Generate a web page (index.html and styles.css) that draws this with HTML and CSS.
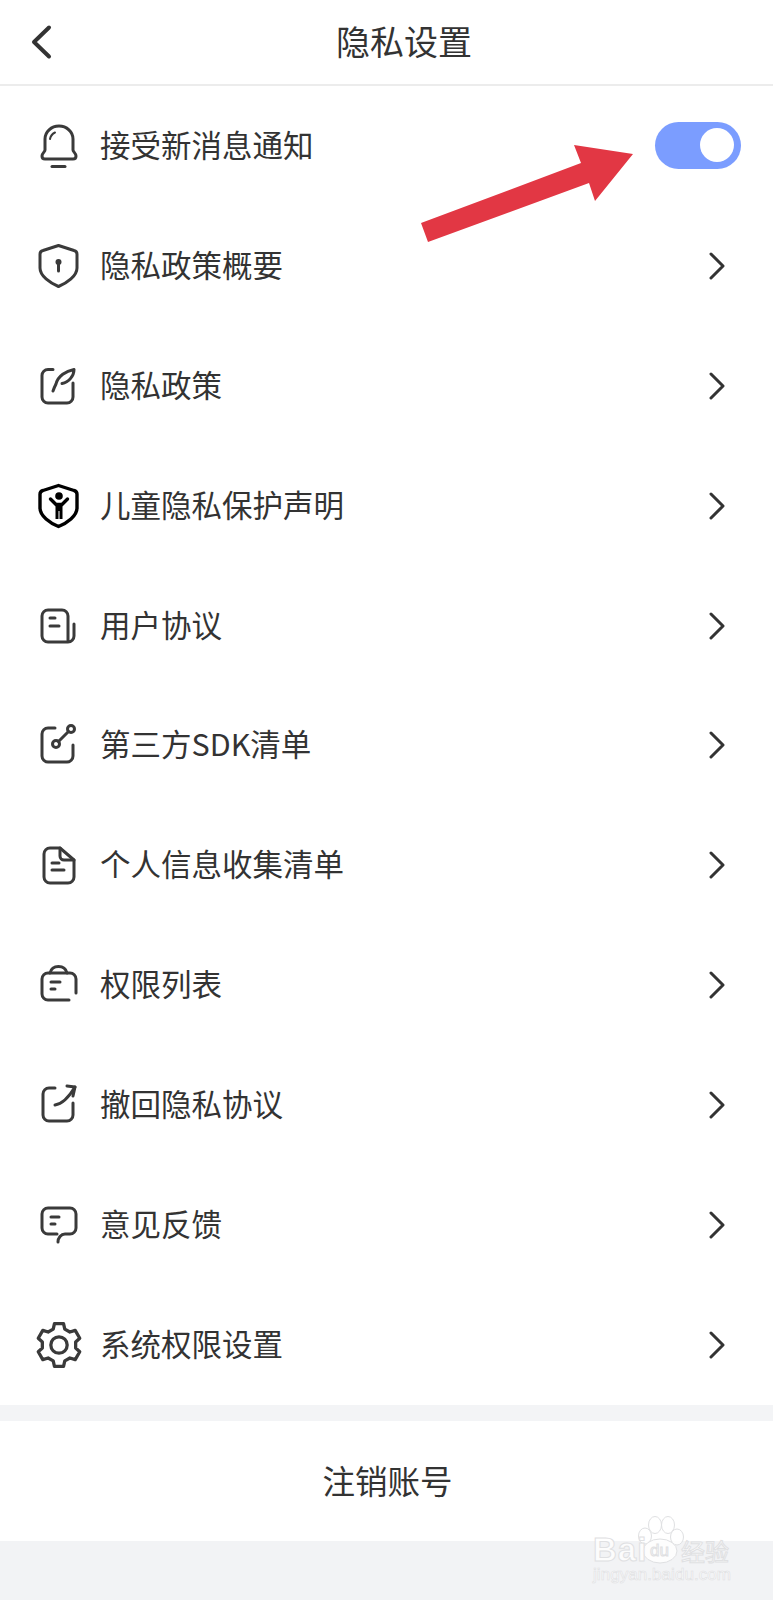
FILE: index.html

```html
<!doctype html>
<html>
<head>
<meta charset="utf-8">
<title>隐私设置</title>
<link rel="stylesheet" href="styles.css">
</head>

<body>
    <div class="page">
        <div class="top-bar">
            <svg class="back" width="24" height="36" viewBox="0 0 24 36"><path d="M20 3.500 5 18l15 14.500"/></svg>
            <h1>隐私设置</h1>
        </div>

        <ul class="menu">
            <li>
                <svg class="icon" viewBox="-2 -2 48 48"><path d="M8 15a14 13 0 0 1 28 0v11c0 2 3 3 3 6 0 2-1 3-3 3H8c-2 0-3-1-3-3 0-3 3-4 3-6z"/><path class="thin" d="M13 15c.5-3 2-5 5-6.500"/><path d="M15 42.500h13"/></svg>
                <span class="label">接受新消息通知</span>
                <div class="switch"><div class="knob"></div></div>
            </li>
            <li>
                <svg class="icon" viewBox="-2 -2 48 48"><path d="M21.500 1.500 37 6.500a4 4 0 0 1 3 4V24c0 8-10 15-18.500 18.500C13 39 3 32 3 24V10.500a4 4 0 0 1 3-4z"/><circle class="solid" cx="21.500" cy="18" r="3"/><path d="M21.500 18v9"/></svg>
                <span class="label">隐私政策概要</span>
                <svg class="arrow" width="16" height="28" viewBox="0 0 16 28"><path d="M2 2l12 12L2 26"/></svg>
            </li>
            <li>
                <svg class="icon" viewBox="-2 -2 48 48"><path d="M16 5.500h-5a6 6 0 0 0-6 6V33a6 6 0 0 0 6 6h19a6 6 0 0 0 6-6V19"/><path d="M16 27c1-3 2-5 3-7 2-8 10-13 18-14.500 0 6-5 13-12 14"/></svg>
                <span class="label">隐私政策</span>
                <svg class="arrow" width="16" height="28" viewBox="0 0 16 28"><path d="M2 2l12 12L2 26"/></svg>
            </li>
            <li>
                <svg class="icon icon-black" viewBox="-2 -2 48 48"><path d="M21.500 1.500 37 6.500a4 4 0 0 1 3 4V24c0 8-10 15-18.500 18.500C13 39 3 32 3 24V10.500a4 4 0 0 1 3-4z"/><circle class="solid" cx="22" cy="12" r="3.800"/><path d="M13.500 15 19 20.500h6l5.500-5.500"/><path class="solid" d="M18.500 19h7v16h-3v-8h-1v8h-3z"/></svg>
                <span class="label">儿童隐私保护声明</span>
                <svg class="arrow" width="16" height="28" viewBox="0 0 16 28"><path d="M2 2l12 12L2 26"/></svg>
            </li>
            <li>
                <svg class="icon" viewBox="-2 -2 48 48"><path d="M31 36V12a6 6 0 0 0-6-6H11a6 6 0 0 0-6 6v20a6 6 0 0 0 6 6h20a6 6 0 0 0 6-6V20"/><path d="M13 14h5M13 22h9"/></svg>
                <span class="label">用户协议</span>
                <svg class="arrow" width="16" height="28" viewBox="0 0 16 28"><path d="M2 2l12 12L2 26"/></svg>
            </li>
            <li>
                <svg class="icon" viewBox="-2 -2 48 48"><path d="M18 5h-7a6 6 0 0 0-6 6v22a6 6 0 0 0 6 6h19a6 6 0 0 0 6-6V22"/><circle cx="19" cy="21" r="3.500"/><circle cx="34" cy="6" r="3.500"/><path d="M21.500 18.500l10-10"/></svg>
                <span class="label">第三方SDK清单</span>
                <svg class="arrow" width="16" height="28" viewBox="0 0 16 28"><path d="M2 2l12 12L2 26"/></svg>
            </li>
            <li>
                <svg class="icon" viewBox="-2 -2 48 48"><path d="M23 5H13a6 6 0 0 0-6 6v23a6 6 0 0 0 6 6h18a6 6 0 0 0 6-6V17z"/><path d="M23 5v8a4 4 0 0 0 4 4h10"/><path d="M15 20h7M15 27h12"/></svg>
                <span class="label">个人信息收集清单</span>
                <svg class="arrow" width="16" height="28" viewBox="0 0 16 28"><path d="M2 2l12 12L2 26"/></svg>
            </li>
            <li>
                <svg class="icon" viewBox="-2 -2 48 48"><path d="M32 37H11a6 6 0 0 1-6-6V16a6 6 0 0 1 6-6h22a6 6 0 0 1 6 6v14"/><path d="M13 10c1-4 4-6.500 8.500-6.500S29 6 30 10"/><path d="M14 19h9M14 26h4"/></svg>
                <span class="label">权限列表</span>
                <svg class="arrow" width="16" height="28" viewBox="0 0 16 28"><path d="M2 2l12 12L2 26"/></svg>
            </li>
            <li>
                <svg class="icon" viewBox="-2 -2 48 48"><path d="M18 5h-6a6 6 0 0 0-6 6v21a6 6 0 0 0 6 6h18a6 6 0 0 0 6-6V20"/><path d="M18 22c7-1 14-8 20-18"/><path d="M30 3l8 1-2 9"/></svg>
                <span class="label">撤回隐私协议</span>
                <svg class="arrow" width="16" height="28" viewBox="0 0 16 28"><path d="M2 2l12 12L2 26"/></svg>
            </li>
            <li>
                <svg class="icon" viewBox="-2 -2 48 48"><path d="M21 39c0-4 3-8 7-8h5a6 6 0 0 0 6-6V11a6 6 0 0 0-6-6H11a6 6 0 0 0-6 6v14a6 6 0 0 0 6 6h9"/><path d="M14 14h8M14 21h4"/></svg>
                <span class="label">意见反馈</span>
                <svg class="arrow" width="16" height="28" viewBox="0 0 16 28"><path d="M2 2l12 12L2 26"/></svg>
            </li>
            <li>
                <svg class="icon" viewBox="0 0 44 44"><polygon points="16.700,7.430 17.840,2.440 26.160,2.440 27.300,7.430 31.970,10.120 36.860,8.620 41.020,15.820 37.270,19.300 37.270,24.700 41.020,28.180 36.860,35.380 31.970,33.880 27.300,36.570 26.160,41.560 17.840,41.560 16.700,36.570 12.030,33.880 7.140,35.380 2.980,28.180 6.730,24.700 6.730,19.300 2.980,15.820 7.140,8.620 12.030,10.120"/><circle cx="22" cy="22" r="7.500"/></svg>
                <span class="label">系统权限设置</span>
                <svg class="arrow" width="16" height="28" viewBox="0 0 16 28"><path d="M2 2l12 12L2 26"/></svg>
            </li>
        </ul>

        <div class="band"></div>
        <div class="logout"><span>注销账号</span></div>
        <div class="bottom"></div>

        <!-- red annotation arrow drawn over the screenshot -->
        <svg class="red-arrow" width="230" height="110" viewBox="415 140 230 110"><polygon points="421,223 428,242 589,183 595,201 633,154 574,145 581,163"/></svg>

        <!-- watermark -->
        <svg class="watermark" width="150" height="80" viewBox="0 0 150 80">
            <ellipse cx="55" cy="26" rx="6.500" ry="8"/>
            <ellipse cx="65" cy="15" rx="6.500" ry="8.500"/>
            <ellipse cx="78" cy="15" rx="6.500" ry="8.500"/>
            <ellipse cx="87" cy="27" rx="6.500" ry="8"/>
            <ellipse cx="70" cy="41" rx="17" ry="12"/>
            <text class="wm-big" x="3" y="51">Bai</text>
            <text class="wm-du" x="60" y="46">du</text>
            <text class="wm-cn" x="91" y="51">经验</text>
            <text class="wm-url" x="3" y="70" textLength="138">jingyan.baidu.com</text>
        </svg>
    </div>
</body>
</html>
```

FILE: styles.css

```css
*{
    padding: 0px;
    margin: 0px;
    box-sizing: border-box;
}
body{
    background-color: white;
    font-family: "Noto Sans CJK SC", "Liberation Sans", sans-serif;
    color: #333;
}
.page{
    width: 773px;
    height: 1600px;
    position: relative;
    overflow: hidden;
    display: flex;
    flex-direction: column;
}
.top-bar{
    height: 86px;
    flex: none;
    display: flex;
    align-items: center;
    padding-left: 29px;
    border-bottom: 2px solid #ececec;
}
.top-bar h1{
    font-size: 34px;
    font-weight: normal;
    margin-left: 283px;
    margin-top: -4px;
}
.back{
    fill: none;
    stroke: #333;
    stroke-width: 4;
    stroke-linecap: round;
    stroke-linejoin: round;
}
.menu{
    list-style: none;
    flex: none;
}
.menu li{
    height: 119.900px;
    display: flex;
    align-items: center;
    padding-left: 35px;
    padding-right: 32px;
}
.icon{
    width: 48px;
    height: 48px;
    flex: none;
    fill: none;
    stroke: #3a3a3a;
    stroke-width: 3;
    stroke-linecap: round;
    stroke-linejoin: round;
}
.icon .solid{
    fill: #3a3a3a;
    stroke: none;
}
.icon .thin{
    stroke-width: 2;
}
.icon-black{
    stroke: #000;
    stroke-width: 3.400;
}
.icon-black .solid{
    fill: #000;
}
.label{
    flex: 1;
    font-size: 30.500px;
    margin-left: 17px;
    margin-bottom: 4px;
}
.arrow{
    margin-right: 16px;
    fill: none;
    stroke: #333;
    stroke-width: 3;
    stroke-linecap: round;
    stroke-linejoin: round;
}
.switch{
    width: 86px;
    height: 47px;
    border-radius: 24px;
    background-color: #7b9dff;
    display: flex;
    align-items: center;
    justify-content: flex-end;
    padding-right: 7px;
    margin-top: -1px;
}
.knob{
    width: 34px;
    height: 34px;
    border-radius: 50%;
    background-color: white;
}
.band{
    height: 16px;
    flex: none;
    background-color: #f3f4f6;
}
.logout{
    height: 120px;
    flex: none;
    display: flex;
    align-items: center;
    justify-content: center;
    font-size: 32.500px;
}
.logout span{
    margin-bottom: 3px;
    margin-left: 2px;
}
.bottom{
    flex: 1;
    background-color: #f2f3f5;
}
.red-arrow{
    position: absolute;
    left: 415px;
    top: 140px;
    fill: #e23744;
}
.watermark{
    position: absolute;
    left: 590px;
    top: 1510px;
    fill: rgba(255,255,255,0.8);
    stroke: #dfe0e2;
    stroke-width: 1;
}
.wm-big{
    font-family: "Liberation Sans", sans-serif;
    font-size: 33px;
    font-weight: bold;
    letter-spacing: 1px;
}
.wm-du{
    font-family: "Liberation Sans", sans-serif;
    font-size: 17px;
}
.wm-cn{
    font-family: "Noto Sans CJK SC", sans-serif;
    font-size: 24px;
}
.wm-url{
    font-family: "Liberation Sans", sans-serif;
    font-size: 17px;
    stroke-width: 0.600;
}
```
